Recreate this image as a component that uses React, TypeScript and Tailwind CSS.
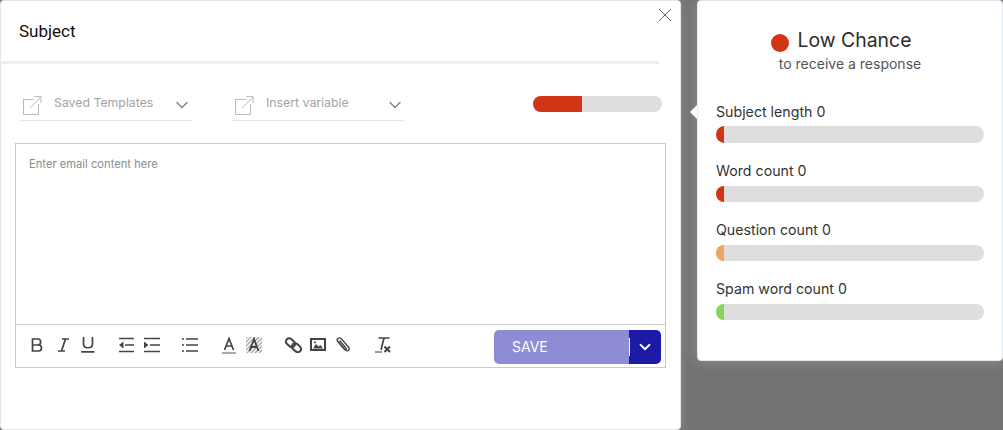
import { ChevronDown } from "lucide-react";
import type { ReactNode } from "react";

const sans = "font-['Inter',sans-serif]";

function Tool({ children, className = "" }: { children: ReactNode; className?: string }) {
  return <span className={`flex h-5 w-[26px] items-center justify-center ${className}`}>{children}</span>;
}

function Glyph({ children }: { children: ReactNode }) {
  return (
    <svg width="20" height="20" viewBox="0 0 20 20" fill="none" stroke="#444" strokeWidth="1.7">
      {children}
    </svg>
  );
}

function OpenIcon() {
  return (
    <svg width="20" height="20" viewBox="0 0 20 20" fill="none" stroke="#bbb" strokeWidth="1" className="mt-[6px] shrink-0">
      <path d="M11.5 4.5H1.5V19.5H16.5V9" />
      <path d="M8 13L18.5 2.5M12.5 1.5H19V8" />
    </svg>
  );
}

function Dropdown({ label, className }: { label: string; className: string }) {
  return (
    <div className={`flex h-[38px] items-center border-b border-[#e6e6ec] pl-[3px] ${className}`}>
      <OpenIcon />
      <span className={`ml-[12px] mt-[3px] flex-1 text-[12.3px] text-[#a3a3a3] ${sans}`}>{label}</span>
      <ChevronDown size={20} strokeWidth={1.8} className="mt-[6px] text-[#888]" />
    </div>
  );
}

function Meter({ label, color, first = false }: { label: string; color: string; first?: boolean }) {
  return (
    <div className="mb-[17px]">
      <div className={`${first ? "h-[25px]" : "h-[26px]"} text-[14.2px] leading-[22px] text-[#333] ${sans}`}>{label}</div>
      <div className={`${first ? "h-[17px]" : "h-4"} overflow-hidden rounded-full bg-[#dedede]`}>
        <div className={`h-full w-2 ${color}`} />
      </div>
    </div>
  );
}

export default function App() {
  return (
    <div className="flex h-[430px] w-[1003px] items-start overflow-hidden bg-[#737373]">
      {/* Editor modal */}
      <div className="relative h-[430px] w-[681px] shrink-0 rounded-[4px] border border-[#e3e8ee] bg-white shadow-[0_0_10px_rgba(255,255,255,0.2)]">
        <button className="absolute right-[8px] top-[7px]">
          <svg width="14" height="14" viewBox="0 0 14 14" stroke="#666" strokeWidth="1" fill="none">
            <path d="M1 1L13 13M13 1L1 13" />
          </svg>
        </button>
        <div className="h-[60px] w-[658px] pl-[18px] pt-[19px] font-['Roboto',sans-serif] text-[17px] leading-[22px] text-[#111]">
          Subject
        </div>
        <div className="h-[3px] w-[658px] bg-[#eeeeee]" />

        <div className="flex h-[57px] items-end px-[18px]">
          <Dropdown label="Saved Templates" className="w-[173px]" />
          <Dropdown label="Insert variable" className="ml-[39px] w-[174px]" />
          <div className="mb-[9px] ml-auto flex h-4 w-[129px] overflow-hidden rounded-full bg-[#dedede]">
            <div className="h-full w-[49px] bg-[#d13516]" />
          </div>
        </div>

        <div className="ml-[14px] mt-[22px] w-[651px] border border-[#cccccc]">
          <div className={`h-[180px] pl-[13px] pt-[12px] text-[11.2px] leading-[16px] text-[#8c8c8c] ${sans}`}>
            Enter email content here
          </div>
          <div className="flex h-[43px] items-center border-t border-[#cccccc] pb-[2px] pl-[7px] pr-[4px]">
            <Tool>
              <Glyph>
                <path d="M6.5 4H12C15.5 4 15.5 10 12 10H6.5V4ZM6.5 10H12.5C16.5 10 16.5 16 12.5 16H6.5V10Z" />
              </Glyph>
            </Tool>
            <Tool>
              <Glyph>
                <path d="M10 4H17M6 16H13M13.5 4L9.5 16" />
              </Glyph>
            </Tool>
            <Tool>
              <Glyph>
                <path d="M5.5 2V9C5.5 14 14.5 14 14.5 9V2M3.2 16.8H16.5" />
              </Glyph>
            </Tool>
            <Tool className="ml-3">
              <Glyph>
                <path d="M3 3.5H18M9 10H18M3 16.5H18" />
                <path d="M7.5 6.5V13.5L3 10Z" fill="#444" stroke="none" />
              </Glyph>
            </Tool>
            <Tool>
              <Glyph>
                <path d="M2 3.5H18M8 10H18M2 16.5H18" />
                <path d="M2 6.5V13.5L6.5 10Z" fill="#444" stroke="none" />
              </Glyph>
            </Tool>
            <Tool className="ml-3">
              <Glyph>
                <path d="M6 4H18M6 10H18M6 16H18" />
                <path d="M2 4H4M2 10H4M2 16H4" />
              </Glyph>
            </Tool>
            <Tool className="ml-[13px]">
              <Glyph>
                <path d="M5.5 15L10 3.5L14.5 15M7 11H13" />
                <path d="M3 18H17" stroke="#aaa" strokeWidth="2" />
              </Glyph>
            </Tool>
            <Tool className="-ml-px">
              <svg width="20" height="20" viewBox="0 0 20 20" fill="none">
                <path
                  d="M2 2H4L2 4ZM6 2H8L2 8V6ZM10 2H12L2 12V10ZM14 2H16L2 16V14ZM18 2V4L4 18H2ZM18 6V8L8 18H6ZM18 10V12L12 18H10ZM18 14V16L16 18H14Z"
                  fill="#aaa"
                />
                <path d="M5.5 16L10 4L14.5 16M7 12H13" stroke="#444" strokeWidth="1.8" />
              </svg>
            </Tool>
            <Tool className="ml-[13px]">
              <Glyph>
                <g strokeWidth="2">
                  <rect x="2.5" y="4.5" width="10" height="6.5" rx="3.2" transform="rotate(40 7.5 7.7)" />
                  <rect x="8.5" y="9.5" width="10" height="6.5" rx="3.2" transform="rotate(40 13.5 12.7)" />
                </g>
              </Glyph>
            </Tool>
            <Tool className="-ml-px">
              <Glyph>
                <rect x="3" y="4" width="14" height="11" strokeWidth="2" />
                <path d="M5 13.5L8 9L10.5 11.5L12.5 10L15 13.5Z" fill="#444" stroke="none" />
                <circle cx="7" cy="7.2" r="1" fill="#444" stroke="none" />
              </Glyph>
            </Tool>
            <Tool className="-ml-[2px]">
              <Glyph>
                <path
                  d="M6 6.5L13.5 15C15.5 17 18.5 14.5 16.5 12L9 3.5C7.5 1.8 4 4 5.5 6.3L12.5 14.5C13.5 15.5 15 14.5 14 13L7.5 5.5"
                  strokeWidth="1.3"
                />
              </Glyph>
            </Tool>
            <Tool className="ml-[15px]">
              <Glyph>
                <path d="M5.5 3H16.5M11 3L8 15" />
                <path d="M2 17H9" stroke="#888" />
                <path d="M11.5 11.5L17 17M17 11.5L11.5 17" strokeWidth="2" />
              </Glyph>
            </Tool>

            <div className="ml-auto mt-1 flex h-[34px] w-[167px] overflow-hidden rounded-[5px]">
              <button className={`h-full w-[135px] bg-[#8f8cd6] pb-[2px] pl-[18px] text-left text-[14px] text-white ${sans}`}>
                SAVE
              </button>
              <button className="flex h-full flex-1 items-center bg-[#1c1aa6]">
                <span className="h-[18px] w-px bg-white" />
                <ChevronDown size={18} strokeWidth={2.4} className="ml-[6px] text-white" />
              </button>
            </div>
          </div>
        </div>
      </div>

      {/* Score panel */}
      <div className="relative ml-4 h-[361px] w-[306px] shrink-0 rounded-[4px] border border-[#e3e8ee] bg-white px-[18px] shadow-[0_0_14px_rgba(255,255,255,0.22)]">
        <span className="absolute -left-[8px] top-[104px] h-0 w-0 border-y-[7px] border-r-[7px] border-y-transparent border-r-white" />
        <div className="flex h-[52px] items-end justify-center pr-[18px]">
          <span className="mb-[1px] h-[18px] w-[18px] rounded-full bg-[#d13516]" />
          <span className={`ml-[9px] text-[19.4px] leading-[26px] text-[#2b2b2b] ${sans}`}>Low Chance</span>
        </div>
        <div className={`mb-[27px] mt-[1px] text-center text-[14px] leading-[20px] text-[#555] ${sans}`}>
          to receive a response
        </div>
        <Meter first label="Subject length 0" color="bg-[#d13516]" />
        <Meter label="Word count 0" color="bg-[#d13516]" />
        <Meter label="Question count 0" color="bg-[#e8a65e]" />
        <Meter label="Spam word count 0" color="bg-[#84d65a]" />
      </div>
    </div>
  );
}
